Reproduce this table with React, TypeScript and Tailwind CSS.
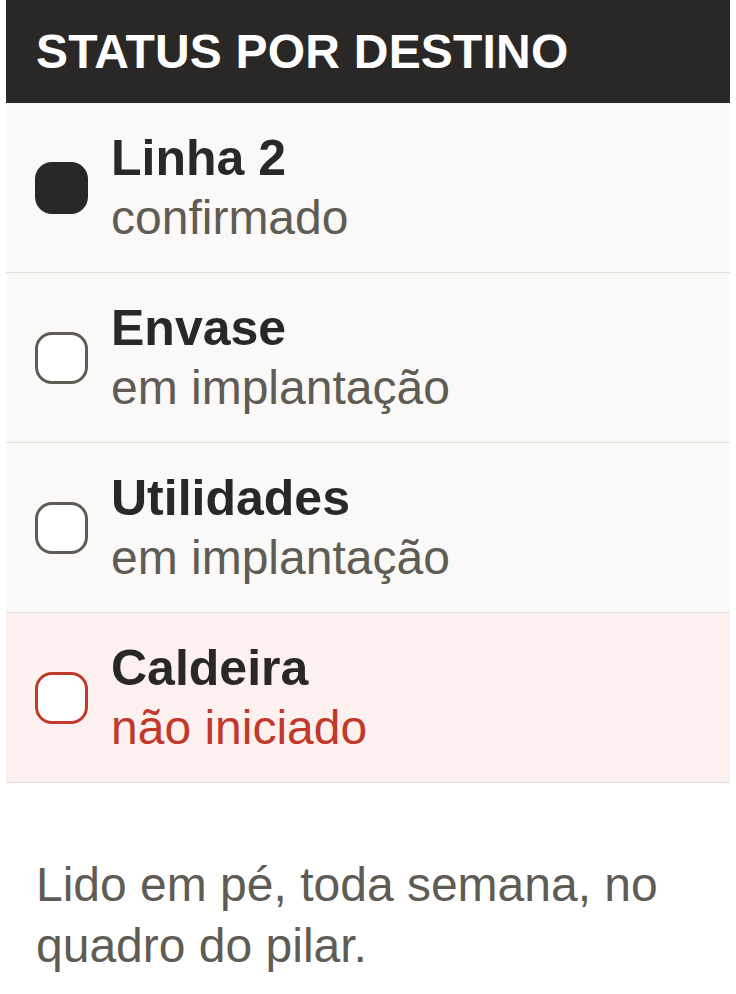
import React from 'react';

type Status = 'done' | 'progress' | 'none';

const DESTINOS: { name: string; status: Status; label: string }[] = [
    { name: 'Linha 2', status: 'done', label: 'confirmado' },
    { name: 'Envase', status: 'progress', label: 'em implantação' },
    { name: 'Utilidades', status: 'progress', label: 'em implantação' },
    { name: 'Caldeira', status: 'none', label: 'não iniciado' },
];

const StatusBox: React.FC<{ status: Status }> = ({ status }) => {
    if (status === 'done') {
        return <div className="w-[53px] h-[52px] rounded-[17px] bg-[#2a2826] flex-shrink-0"></div>;
    }
    if (status === 'none') {
        return <div className="w-[53px] h-[52px] rounded-[17px] border-[3.5px] border-[#c0392b] bg-white flex-shrink-0"></div>;
    }
    return <div className="w-[53px] h-[52px] rounded-[17px] border-[3.5px] border-[#5f5b55] bg-white flex-shrink-0"></div>;
};

export default function App() {
    return (
        <div className="min-h-screen bg-white px-[6px] font-['Liberation_Sans',Arial,sans-serif]">
            {/* Header */}
            <div className="h-[103px] bg-[#2a2826] flex items-center pl-[30px]">
                <h1 className="text-[48px] font-bold text-white leading-none tracking-[0.2px]">STATUS POR DESTINO</h1>
            </div>

            {/* Rows */}
            <div>
                {DESTINOS.map((d) => {
                    const isMissing = d.status === 'none';
                    return (
                        <div
                            key={d.name}
                            className={`h-[170px] flex items-center gap-[23px] pl-[29px] border-b border-[#e2ded8] ${isMissing ? 'bg-[#fdf1f0]' : 'bg-[#faf9f7]'}`}
                        >
                            <StatusBox status={d.status} />
                            <div className="flex flex-col">
                                <span className="text-[50px] font-bold text-[#2a2826] leading-[60px]">{d.name}</span>
                                <span className={`text-[48px] leading-[60px] ${isMissing ? 'text-[#c0392b]' : 'text-[#5f5b55]'}`}>
                                    {d.label}
                                </span>
                            </div>
                        </div>
                    );
                })}
            </div>

            {/* Footer note */}
            <p className="mt-[71px] pl-[30px] pr-[30px] text-[48px] leading-[61px] text-[#5f5b55]">
                Lido em pé, toda semana, no quadro do pilar.
            </p>
        </div>
    );
}
